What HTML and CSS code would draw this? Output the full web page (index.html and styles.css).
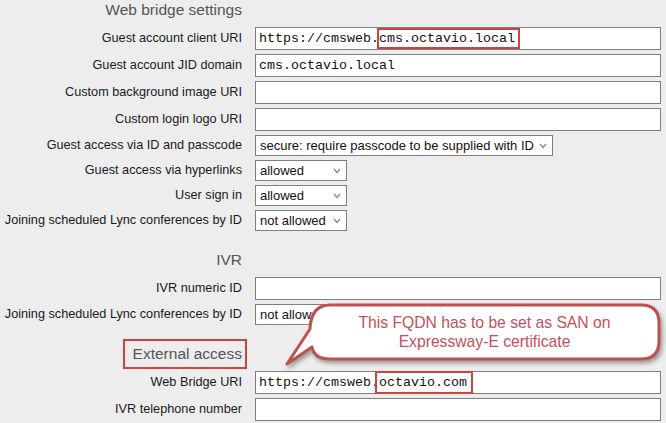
FILE: index.html
```html
<!DOCTYPE html>
<html lang="en">
<head>
    <meta charset="UTF-8">
    <title>Web bridge settings</title>
    <link rel="stylesheet" href="styles.css">
</head>
<body>

    <div class="form">

        <!-- Web bridge -->
        <div class="title-row"><h3>Web bridge settings</h3></div>
        <div class="row">
            <label>Guest account client URI</label>
            <div class="textbox">https://cmsweb.<span class="mark mark-local">cms.octavio.local</span></div>
        </div>
        <div class="row">
            <label>Guest account JID domain</label>
            <div class="textbox">cms.octavio.local</div>
        </div>
        <div class="row">
            <label>Custom background image URI</label>
            <div class="textbox"></div>
        </div>
        <div class="row">
            <label>Custom login logo URI</label>
            <div class="textbox"></div>
        </div>
        <div class="row select-row">
            <label>Guest access via ID and passcode</label>
            <div class="select wide">
                <select><option>secure: require passcode to be supplied with ID</option></select>
                <svg class="chevron" width="8" height="6" viewBox="0 0 8 6"><path d="M1 1 L4 4.5 L7 1" fill="none" stroke="#8a8a8a" stroke-width="1.4"/></svg>
            </div>
        </div>
        <div class="row select-row">
            <label>Guest access via hyperlinks</label>
            <div class="select">
                <select><option>allowed</option></select>
                <svg class="chevron" width="8" height="6" viewBox="0 0 8 6"><path d="M1 1 L4 4.5 L7 1" fill="none" stroke="#8a8a8a" stroke-width="1.4"/></svg>
            </div>
        </div>
        <div class="row select-row">
            <label>User sign in</label>
            <div class="select">
                <select><option>allowed</option></select>
                <svg class="chevron" width="8" height="6" viewBox="0 0 8 6"><path d="M1 1 L4 4.5 L7 1" fill="none" stroke="#8a8a8a" stroke-width="1.4"/></svg>
            </div>
        </div>
        <div class="row select-row">
            <label>Joining scheduled Lync conferences by ID</label>
            <div class="select">
                <select><option>not allowed</option></select>
                <svg class="chevron" width="8" height="6" viewBox="0 0 8 6"><path d="M1 1 L4 4.5 L7 1" fill="none" stroke="#8a8a8a" stroke-width="1.4"/></svg>
            </div>
        </div>

        <!-- IVR -->
        <div class="title-row section"><h3>IVR</h3></div>
        <div class="row">
            <label>IVR numeric ID</label>
            <div class="textbox"></div>
        </div>
        <div class="row select-row">
            <label>Joining scheduled Lync conferences by ID</label>
            <div class="select">
                <select><option>not allowed</option></select>
                <svg class="chevron" width="8" height="6" viewBox="0 0 8 6"><path d="M1 1 L4 4.5 L7 1" fill="none" stroke="#8a8a8a" stroke-width="1.4"/></svg>
            </div>
        </div>

        <!-- External access -->
        <div class="title-row section"><h3><span class="mark-title">External access</span></h3></div>
        <div class="row">
            <label>Web Bridge URI</label>
            <div class="textbox">https://cmsweb.<span class="mark mark-com">octavio.com</span></div>
        </div>
        <div class="row">
            <label>IVR telephone number</label>
            <div class="textbox"></div>
        </div>
    </div>

    <!-- callout over the form -->
    <div class="callout">
        <svg class="callout-shape" width="386" height="76" viewBox="280 298 386 76">
            <path d="M330 305 H641 Q659 305 659 323 V341 Q659 359 641 359 H330 Q314 359 312 347 L287 364 L310 329 Q311 305 330 305 Z"
                  fill="#fff" stroke="#c0504d" stroke-width="3" stroke-linejoin="round"/>
        </svg>
        <p class="callout-text">This FQDN has to be set as SAN on<br>Expressway-E certificate</p>
    </div>

</body>
</html>
```

FILE: styles.css
```css
body {
    font-family: "Liberation Sans", Arial, sans-serif;
    background-color: #ededed;
    margin: 0;
    padding: 0;
    color: #1a1a1a;
    position: relative;
    height: 423px;
    overflow: hidden;
}

.form {
    width: 661px;
}

.row {
    display: grid;
    grid-template-columns: 242px 1fr;
    column-gap: 13px;
    align-items: start;
    height: 27px;
}

.row label {
    text-align: right;
    font-size: 12.7px;
    line-height: 23px;
    white-space: nowrap;
}

.select-row {
    height: 25px;
}

.select-row label {
    line-height: 21px;
}

.title-row {
    display: grid;
    grid-template-columns: 242px 1fr;
    height: 27px;
}

.title-row.section {
    margin-top: 15px;
}

h3 {
    margin: 0;
    text-align: right;
    font-size: 15.5px;
    font-weight: normal;
    line-height: 20px;
    color: #555;
    white-space: nowrap;
}

.textbox {
    display: flex;
    align-items: center;
    height: 23px;
    box-sizing: border-box;
    border: 1px solid #7f7f7f;
    background: white;
    padding-left: 3px;
    font-family: "Liberation Mono", "Courier New", monospace;
    font-size: 13.33px;
    color: #111;
    white-space: pre;
}

.mark {
    display: inline-block;
    height: 21px;
    box-sizing: border-box;
    border: 2px solid #c9463f;
    line-height: 17px;
    margin-left: -2px;
}

.mark-local {
    padding-right: 3px;
}

.mark-com {
    padding-left: 2px;
    padding-right: 4px;
    margin-left: -4px;
    height: 23px;
    line-height: 19px;
}

.mark-title {
    display: inline-block;
    border: 2px solid #c9463f;
    padding: 3px 3px 3px 8px;
    margin-top: -8px;
    margin-right: -5px;
}

.select {
    position: relative;
    width: 92px;
    height: 21px;
}

.select.wide {
    width: 298px;
}

.select select {
    appearance: none;
    -webkit-appearance: none;
    width: 100%;
    height: 21px;
    margin: 0;
    padding: 0 0 0 4px;
    border: 1px solid #7f7f7f;
    border-radius: 0;
    background: white;
    font-family: "Liberation Sans", Arial, sans-serif;
    font-size: 13px;
    color: #111;
}

.chevron {
    position: absolute;
    right: 6px;
    top: 8px;
    pointer-events: none;
}

/* callout overlay */
.callout {
    position: absolute;
    left: 280px;
    top: 298px;
    width: 386px;
    height: 76px;
}

.callout-shape {
    display: block;
    filter: drop-shadow(2px 3px 2px rgba(0, 0, 0, 0.35));
}

.callout-text {
    position: absolute;
    left: 30px;
    top: 15px;
    width: 349px;
    margin: 0;
    text-align: center;
    font-family: "Liberation Sans", Arial, sans-serif;
    font-size: 15.7px;
    line-height: 19px;
    color: #c4505a;
}
```
